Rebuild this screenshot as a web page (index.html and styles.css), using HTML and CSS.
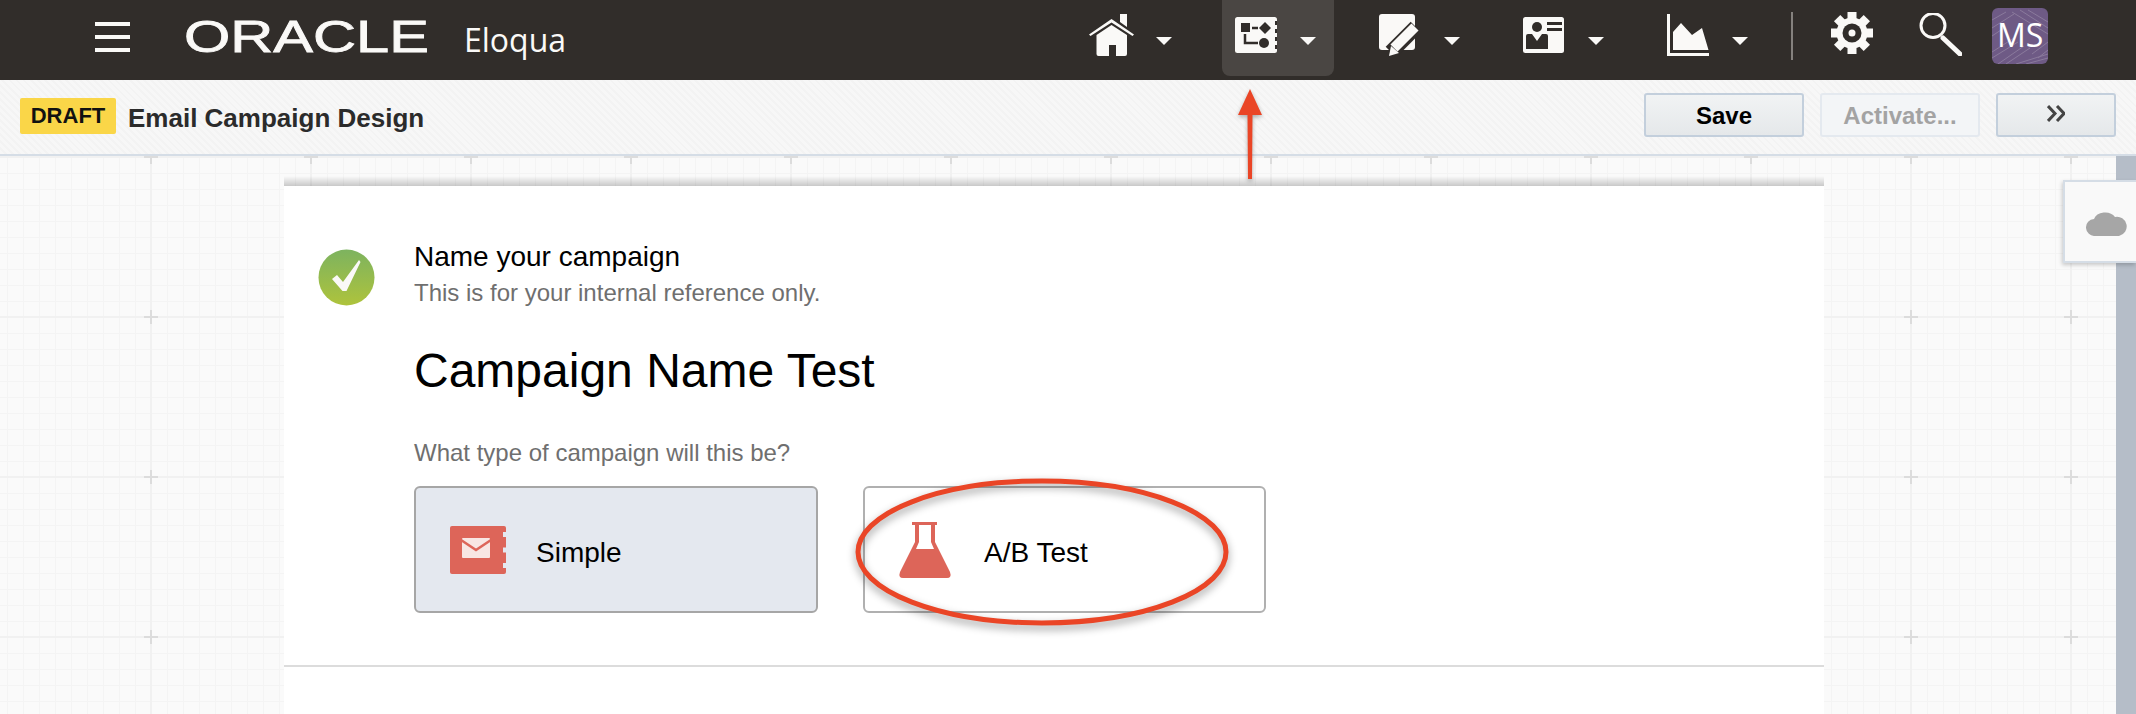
FILE: index.html
```html
<!DOCTYPE html>
<html lang="en">
<head>
<meta charset="utf-8">
<title>Email Campaign Design</title>
<link rel="stylesheet" href="styles.css">
</head>
<body>
<header class="topbar">
  <div class="burger"><span></span><span></span><span></span></div>
  <svg class="logo" viewBox="0 0 245 31"><text class="logo-text" x="0" y="31" textLength="245" lengthAdjust="spacingAndGlyphs">ORACLE</text></svg>
  <div class="product">Eloqua</div>
  <nav class="nav">
    <div class="nav-item">
      <svg class="ico w45" viewBox="0 0 45 42"><path class="w" d="M31 0h7v13l-7-5z"/><path class="w" d="M22.5 5 45 20.500 43.500 22 22.500 8.500 1.500 22 0 20.500z"/><path class="w" d="M22.500 11 38 21v19q0 2-2 2H27V31h-7v11H9.500q-2 0-2-2V21z"/></svg>
      <span class="caret caret-n"></span>
    </div>
    <div class="nav-item active">
      <svg class="ico w42" viewBox="0 0 42 42"><rect class="w" y="3" width="42" height="36" rx="2.500"/><rect class="d" x="6" y="9" width="9" height="9"/><path class="d" d="M30 8l6 6-6 6-6-6z"/><path class="ds" d="M17 14h6M10 20v9h13"/><circle class="d" cx="29" cy="29" r="5"/><path class="d" d="M40 7h2v4h-2zM40 15h2v4h-2zM40 23h2v4h-2zM40 31h2v4h-2z"/></svg>
      <span class="caret"></span>
    </div>
    <div class="nav-item">
      <svg class="ico w41" viewBox="0 0 41 42"><rect class="w" width="36" height="36" rx="3"/><path class="dthick" d="M12 38 37 13"/><path class="wthick" d="M15 34 36 13"/><path class="w" d="M10 42l2-10 8 7z"/></svg>
      <span class="caret caret-w"></span>
    </div>
    <div class="nav-item">
      <svg class="ico w41" viewBox="0 0 41 42"><rect class="w" y="3" width="41" height="36" rx="2.500"/><circle class="d" cx="14" cy="13" r="5"/><path class="d" d="M3 22q0-2 2-2h4l5 7 5-7h4q2 0 2 2v13H3z"/><path class="d" d="M24 8h15v3H24zM24 14h15v3H24z"/></svg>
      <span class="caret caret-w"></span>
    </div>
    <div class="nav-item">
      <svg class="ico w42" viewBox="0 0 42 42"><path class="w" d="M0 0h3v39h39v3H0z"/><path class="w" d="M6 18l8-9 11 12 10-7 6.500 22H6z"/></svg>
      <span class="caret"></span>
    </div>
    <div class="sep"></div>
    <svg class="gear" viewBox="0 0 42 42"><g class="w"><circle cx="21" cy="21" r="15.500"/><rect x="16.500" width="9" height="42"/><rect y="16.500" width="42" height="9"/><rect x="16.500" width="9" height="42" transform="rotate(45 21 21)"/><rect x="16.500" width="9" height="42" transform="rotate(-45 21 21)"/></g><circle class="d" cx="21" cy="21" r="9.500"/><circle class="w" cx="21" cy="21" r="3.500"/></svg>
    <svg class="search" viewBox="0 0 43 43"><circle class="ws" cx="14" cy="12.500" r="12"/><path class="wh" d="M24 25 41 41"/></svg>
    <svg class="avatar" viewBox="0 0 56 56"><rect class="av-bg" width="56" height="56" rx="6"/><path class="av-line" d="M0 44 22 30M0 50 26 34M6 56 32 38M14 56 38 40M36 2 56 14M28 2 56 20M20 4 56 26M40 46 56 34M46 50 56 42M24 56 56 46M34 56 56 50M0 12 14 4M0 20 22 6M0 28 12 20"/><text class="av-text" x="5" y="39">MS</text></svg>
  </nav>
</header>

<section class="toolbar">
  <span class="badge">DRAFT</span>
  <h1 class="page-title">Email Campaign Design</h1>
  <div class="actions">
    <button class="btn btn-save">Save</button>
    <button class="btn btn-off">Activate...</button>
    <button class="btn btn-more"><svg class="chev" viewBox="0 0 18 17"><path d="M1 1l7 7.500-7 7.500M10 1l7 7.500-7 7.500"/></svg></button>
  </div>
</section>

<main class="main">
  <div class="canvas">
    <div class="shade"></div>
    <div class="panel">
      <div class="step">
        <svg class="check" viewBox="0 0 57 57"><defs><linearGradient id="gr" x1="0" y1="0" x2="0" y2="1"><stop offset="0" stop-color="#7db35f"/><stop offset="1" stop-color="#aec33c"/></linearGradient></defs><circle cx="28.500" cy="28.500" r="28" fill="url(#gr)"/><path class="w" d="M14 30l5-4 6 7 16-22 1.500 2-14 29h-4z"/></svg>
        <div class="step-body">
          <div class="step-title">Name your campaign</div>
          <div class="muted step-sub">This is for your internal reference only.</div>
          <div class="camp-name">Campaign Name Test</div>
          <div class="muted step-q">What type of campaign will this be?</div>
          <div class="cards">
            <div class="card card-on">
              <svg class="card-ico" viewBox="0 0 56 48"><rect class="r" width="56" height="48" rx="2"/><path class="n" d="M53 6h3v5h-3zM53 21.500h3v5h-3zM53 37h3v5h-3z"/><rect class="e" x="12" y="12" width="28" height="20" rx="1"/><path class="rs" d="M11 14l15 10 15-10"/></svg>
              <span class="card-label">Simple</span>
            </div>
            <div class="card">
              <svg class="card-ico flask" viewBox="0 0 54 56"><path class="r" d="M14 0h25v3H14z"/><path class="r" d="M17 3h4v17l-3 7h18l-3-7V3h4v17l15 30q2 6-3 6H5q-5 0-3-6l15-30z"/></svg>
              <span class="card-label">A/B Test</span>
            </div>
          </div>
        </div>
      </div>
      <div class="rule"></div>
    </div>
  </div>
  <div class="scrollbar"></div>
</main>

<aside class="cloud-tab"><svg class="cloud" viewBox="0 0 41 26"><path d="M9 26a8.500 8.500 0 0 1-1-17 11.500 9 0 0 1 21-2 9 9 0 0 1 4 19z"/></svg></aside>

<svg class="arrow" viewBox="0 0 30 96"><path class="mark" d="M15 0l12 26h-9.500l-.5 64h-4l-.5-64H3z"/></svg>
<svg class="ring" viewBox="0 0 380 156"><ellipse cx="190" cy="76" rx="184" ry="71"/></svg>
</body>
</html>
```

FILE: styles.css
```css
* { box-sizing: border-box; }
html, body { margin: 0; padding: 0; }
body {
  position: relative;
  width: 2136px;
  height: 714px;
  overflow: hidden;
  display: flex;
  flex-direction: column;
  font-family: "Liberation Sans", Arial, sans-serif;
  color: #000;
  background: #fff;
}

/* shared icon fills */
.w { fill: #faf9f7; }
.d { fill: #312d2a; }
.ds { fill: none; stroke: #312d2a; stroke-width: 2.500; }
.ws { fill: none; stroke: #faf9f7; stroke-width: 3; }
.wh { fill: none; stroke: #faf9f7; stroke-width: 5; stroke-linecap: round; }
.dthick { fill: none; stroke: #312d2a; stroke-width: 15; }
.wthick { fill: none; stroke: #faf9f7; stroke-width: 10; }

/* top bar */
.topbar {
  height: 80px;
  flex: none;
  display: flex;
  align-items: flex-start;
  padding-left: 95px;
  background: #312d2a;
}
.burger {
  width: 35px;
  margin-top: 22px;
  display: flex;
  flex-direction: column;
  gap: 9px;
}
.burger span { display: block; height: 4px; background: #faf9f7; }
.logo { width: 245px; height: 31px; margin: 21px 0 0 54px; overflow: visible; }
.logo-text {
  font-family: "Liberation Sans", Arial, sans-serif;
  font-size: 45px;
  fill: #faf9f7;
  stroke: #faf9f7;
  stroke-width: .8;
}
.product {
  margin: 20px 0 0 35px;
  font-family: "Open Sans", sans-serif;
  font-size: 32px;
  line-height: 40px;
  color: #faf9f7;
}
.nav {
  margin-left: auto;
  padding-right: 88px;
  display: flex;
  align-items: flex-start;
}
.nav-item {
  height: 76px;
  display: flex;
  align-items: flex-start;
  padding: 14px 18px 0 13px;
  margin-right: 32px;
  border-radius: 0 0 8px 8px;
}
.nav-item.active { background: #4a4643; }
.ico { height: 42px; flex: none; }
.w45 { width: 45px; }
.w42 { width: 42px; }
.w41 { width: 41px; }
.caret {
  width: 0;
  height: 0;
  margin: 23px 0 0 23px;
  border-left: 8px solid transparent;
  border-right: 8px solid transparent;
  border-top: 8px solid #faf9f7;
}
.caret-n { margin-left: 22px; }
.caret-w { margin-left: 24px; }
.sep { width: 2px; height: 48px; margin: 12px 0 0 -7px; background: #85817e; }
.gear { width: 42px; height: 42px; margin: 12px 0 0 38px; }
.search { width: 43px; height: 43px; margin: 13px 0 0 46px; }
.avatar { width: 56px; height: 56px; margin: 8px 0 0 30px; }
.av-bg { fill: #6e5a85; }
.av-line { fill: none; stroke: #8a7a9c; stroke-width: 1; }
.av-text { font-family: "Open Sans", sans-serif; font-size: 32px; fill: #fff; }

/* toolbar */
.toolbar {
  height: 76px;
  flex: none;
  display: flex;
  align-items: center;
  padding: 0 20px 4px 20px;
  border-bottom: 2px solid #d5dde6;
  background: repeating-linear-gradient(45deg, #f7f7f7 0 3px, #f3f3f3 3px 5px);
}
.badge {
  height: 36px;
  width: 96px;
  margin-top: 2px;
  display: flex;
  align-items: center;
  justify-content: center;
  border-radius: 2px;
  background: #fad648;
  font-size: 22px;
  font-weight: 700;
  color: #111;
}
.page-title {
  margin: 6px 0 0 12px;
  font-size: 26px;
  font-weight: 700;
  color: #2b2b2b;
}
.actions { margin-left: auto; display: flex; gap: 16px; }
.btn {
  width: 160px;
  height: 44px;
  padding: 2px 0 0;
  display: flex;
  align-items: center;
  justify-content: center;
  border: 2px solid #c3cfdc;
  border-radius: 3px;
  background: linear-gradient(#f1f3f4, #e5e8ea);
  font-family: "Liberation Sans", Arial, sans-serif;
  font-size: 24px;
  font-weight: 700;
  color: #000;
}
.btn-off { color: #a3a3a3; border-color: #e4e9ef; background: #f3f5f7; }
.btn-more { width: 120px; }
.chev { width: 18px; height: 17px; margin-top: -5px; }
.chev path { fill: none; stroke: #444; stroke-width: 3; }

/* canvas */
.main { flex: 1; min-height: 0; display: flex; }
.canvas {
  flex: 1;
  padding-top: 20px;
  overflow: hidden;
  background-color: #fafafa;
  background-image: url("data:image/svg+xml,%3Csvg xmlns='http://www.w3.org/2000/svg' width='160' height='160'%3E%3Cdefs%3E%3Cpattern id='m' width='16' height='16' patternUnits='userSpaceOnUse'%3E%3Cpath d='M0 0H16M0 0V16' stroke='%23f4f4f4' stroke-width='2' fill='none'/%3E%3C/pattern%3E%3C/defs%3E%3Crect width='160' height='160' fill='url(%23m)'/%3E%3Cpath d='M80 0V160M0 80H160' stroke='%23f1f1f1' stroke-width='2'/%3E%3Cpath d='M73 80H87M80 73V87' stroke='%23dcdcdc' stroke-width='2'/%3E%3C/svg%3E");
  background-position: 71px -79px;
}
.shade {
  width: 1540px;
  height: 10px;
  margin-left: 284px;
  background: linear-gradient(rgba(0, 0, 0, 0), rgba(0, 0, 0, .2));
}
.panel {
  width: 1540px;
  height: 528px;
  margin-left: 284px;
  background: #fff;
}
.step { display: flex; padding: 55px 0 0 34px; }
.check { width: 57px; height: 57px; margin-top: 8px; flex: none; }
.step-body { margin-left: 39px; }
.step-title { font-size: 28px; line-height: 32px; }
.muted { font-size: 24px; line-height: 28px; color: #6f6f6f; }
.step-sub { margin-top: 6px; }
.camp-name { margin-top: 36px; font-size: 48px; line-height: 56px; }
.step-q { margin-top: 40px; }
.cards { margin-top: 19px; display: flex; gap: 45px; }
.card {
  width: 403px;
  height: 127px;
  display: flex;
  align-items: center;
  padding-left: 33px;
  border: 2px solid #b0b0b0;
  border-radius: 6px;
}
.card-on { width: 404px; padding-left: 34px; background: #e4e8ef; border-color: #a6a6a6; }
.card-ico { width: 56px; height: 48px; flex: none; }
.flask { width: 54px; height: 56px; margin-right: 2px; }
.r { fill: #dd6559; }
.n { fill: #e4e8ef; }
.e { fill: #f8e6e3; }
.rs { fill: none; stroke: #dd6559; stroke-width: 2.500; }
.card-label { margin: 7px 0 0 30px; font-size: 28px; line-height: 32px; }
.rule { height: 2px; margin-top: 52px; background: #dcdcdc; }
.scrollbar { width: 20px; flex: none; background: #b5bdc8; }

/* overlays */
.cloud-tab {
  position: absolute;
  top: 180px;
  right: 0;
  width: 73px;
  height: 83px;
  display: flex;
  align-items: center;
  padding-left: 21px;
  border: 2px solid #d5dde6;
  border-right: 0;
  background: #f9f9f9;
  box-shadow: -1px 2px 4px rgba(0, 0, 0, .2);
}
.cloud { width: 41px; height: 26px; margin-top: 2px; }
.cloud path { fill: #a6a6a6; }
.arrow {
  position: absolute;
  left: 1235px;
  top: 89px;
  width: 30px;
  height: 96px;
  filter: drop-shadow(0 2px 2px rgba(0, 0, 0, .3));
}
.mark { fill: #ea4526; }
.ring {
  position: absolute;
  left: 852px;
  top: 476px;
  width: 380px;
  height: 156px;
  filter: drop-shadow(0 4px 4px rgba(0, 0, 0, .4));
}
.ring ellipse { fill: none; stroke: #ea4526; stroke-width: 5; }
```
